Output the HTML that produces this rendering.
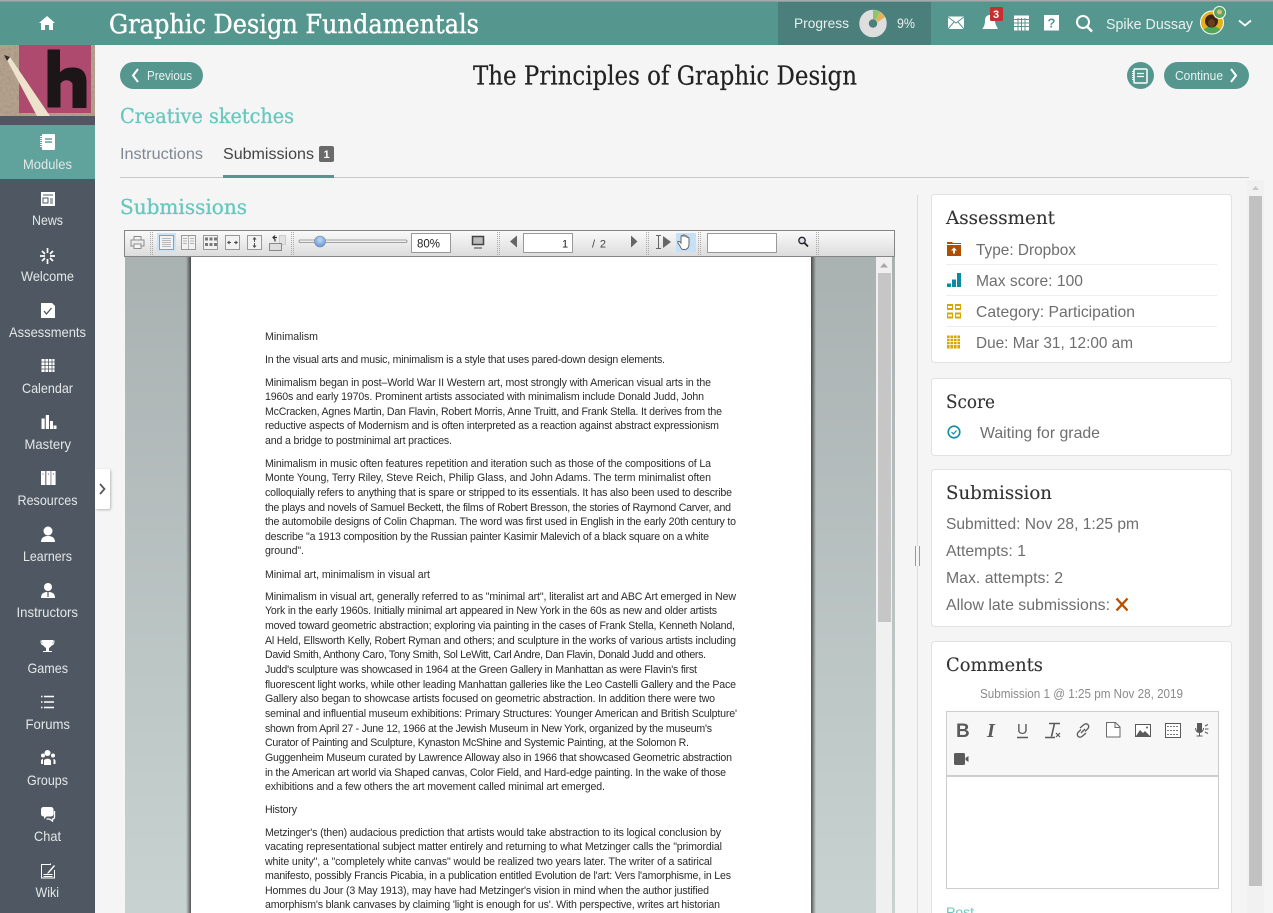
<!DOCTYPE html>
<html><head><meta charset="utf-8"><title>The Principles of Graphic Design</title>
<style>
html,body{margin:0;padding:0;width:1273px;height:913px;overflow:hidden;background:#f5f5f5}
svg{display:block}
text{font-family:"Liberation Sans",sans-serif;white-space:pre}
.s{font-family:"DejaVu Serif","Liberation Serif",serif}
.n text{font-size:14px;fill:#e4e7e8}
.r text{font-size:16px;fill:#6e6e6e}
.p text{font-size:10.6px;fill:#2c2c2c}
.w{fill:#fff}
.d{fill:none;stroke:#aaa;stroke-width:1;stroke-dasharray:1 1}
.ch{font-size:18.5px;fill:#333;stroke:#333;stroke-width:.12}
.r text.ch{font-size:18.5px;fill:#333}
</style></head><body>
<svg width="1273" height="913" viewBox="0 0 1273 913" xmlns="http://www.w3.org/2000/svg">
<defs>
<linearGradient id="tb" x1="0" y1="0" x2="0" y2="1"><stop offset="0" stop-color="#fafafa"/><stop offset="1" stop-color="#dcdcdc"/></linearGradient>
<linearGradient id="vb" x1="0" y1="0" x2="0" y2="1"><stop offset="0" stop-color="#a9b1b1"/><stop offset="1" stop-color="#c8d3d1"/></linearGradient>
<radialGradient id="kn" cx=".5" cy=".35" r=".7"><stop offset="0" stop-color="#c4daf3"/><stop offset="1" stop-color="#5a8fd0"/></radialGradient>
<linearGradient id="sh" x1="0" y1="0" x2="1" y2="0"><stop offset="0" stop-color="#000" stop-opacity="0"/><stop offset="1" stop-color="#000" stop-opacity=".6"/></linearGradient>
<linearGradient id="sh2" x1="0" y1="0" x2="1" y2="0"><stop offset="0" stop-color="#000" stop-opacity=".6"/><stop offset="1" stop-color="#000" stop-opacity="0"/></linearGradient>
<filter id="grain" x="0" y="0" width="100%" height="100%"><feTurbulence type="fractalNoise" baseFrequency=".35" numOctaves="2" seed="4"/><feColorMatrix values="0 0 0 0 .35  0 0 0 0 .27  0 0 0 0 .2  0 0 0 1.3 -.45"/></filter>
<filter id="ts" x="-50%" y="-20%" width="200%" height="140%"><feDropShadow dx="1" dy="1" stdDeviation="1.2" flood-color="#000" flood-opacity=".25"/></filter>
</defs>
<rect width="1273" height="913" fill="#f5f5f5"/>

<!-- top bar -->
<rect width="1273" height="45" fill="#55978f"/>
<rect width="1273" height="1.5" fill="#a9a9a9"/>
<path class="w" d="M47 16l8 7h-2v7h-4v-5h-4v5h-4v-7h-2z"/>
<text class="s" x="109" y="33" font-size="26" fill="#fff" stroke="#fff" stroke-width=".4" textLength="370" lengthAdjust="spacingAndGlyphs">Graphic Design Fundamentals</text>
<rect x="778" y="2" width="153" height="43" fill="#4a7f7b"/>
<text x="794" y="28" font-size="14" fill="#e8f0ef" textLength="55" lengthAdjust="spacingAndGlyphs">Progress</text>
<circle cx="873" cy="23.5" r="9" fill="none" stroke="#dedede" stroke-width="9.5"/>
<path d="M873 10a13.500 13.500 0 0 1 7 2l-4 8a5 5 0 0 0-3-1z" fill="#8fc46d"/>
<path d="M880 12a13.500 13.500 0 0 1 5 5l-7 5a5 5 0 0 0-2-2z" fill="#e4b25c"/>
<text x="897" y="28" font-size="14" fill="#e8f0ef" textLength="18" lengthAdjust="spacingAndGlyphs">9%</text>
<rect x="948" y="16.500" width="16" height="12.500" fill="#fff"/>
<path d="M948 17l8 6 8-6M948 29l6-7M964 29l-6-7" fill="none" stroke="#55978f" stroke-width="1"/>
<path class="w" d="M990 15c4 0 5 3 5 6 0 3 2 6 3 8h-16c2-2 3-5 3-8 0-3 1-6 5-6z"/>
<rect x="990" y="7" width="13" height="14" rx="1.500" fill="#c62f2f"/>
<text x="993" y="18" font-size="11" font-weight="bold" fill="#fff">3</text>
<rect x="1014" y="15.500" width="15" height="15" fill="#fff"/>
<path d="M1014 19.500h15M1014 23h15M1014 26.500h15M1018 18v13M1021.500 18v13M1025 18v13" stroke="#55978f" stroke-width="1"/>
<rect x="1044" y="15" width="15" height="15.500" fill="#fff"/>
<text x="1047.500" y="27.500" font-size="13" font-weight="bold" fill="#55978f">?</text>
<circle cx="1083" cy="22" r="6" fill="none" stroke="#fff" stroke-width="2"/><path d="M1087 26.500l5 5" stroke="#fff" stroke-width="2.500"/>
<text x="1106" y="29" font-size="14.500" fill="#e8f0ef" textLength="87" lengthAdjust="spacingAndGlyphs">Spike Dussay</text>
<circle cx="1212" cy="22.500" r="12" fill="#fff"/><circle cx="1212" cy="22.500" r="11" fill="#e5b01c"/>
<path d="M1203.500 29.500a11 11 0 0 0 17 0l-5-3h-7z" fill="#4fa85a"/><circle cx="1211.500" cy="21" r="6.500" fill="#3f2412"/><ellipse cx="1211.500" cy="23" rx="3.500" ry="4" fill="#6a3d1f"/>
<circle cx="1219.500" cy="12.500" r="6.500" fill="#fff"/><circle cx="1219.500" cy="12.500" r="5.500" fill="#58a55c"/><circle cx="1219.500" cy="12" r="2.500" fill="#e2b68c"/>
<path d="M1239 20.500l6 5 6-5" fill="none" stroke="#fff" stroke-width="1.800"/>

<!-- sidebar -->
<rect y="45" width="95" height="868" fill="#4f5862"/>
<rect y="125" width="95" height="54" fill="#5fa39c"/>
<!-- logo -->
<rect y="45" width="95" height="71" fill="#b5a28e"/>
<rect y="45" width="95" height="71" filter="url(#grain)"/>
<rect x="19" y="45" width="72" height="68" fill="#ad4a6e"/>
<path d="M47.500 49.500h12.500v23c4-5 9-5 13-5 9 0 13.500 5 13.500 14v26.500h-14V84c-2-5-10-5-12 0v23.500H47.500z" fill="#1c1618"/>
<path d="M7 60l3-3 40 59H37z" fill="#ede3cc"/><path d="M4 55l6 2-3 4z" fill="#33302e"/>

<g class="n">
<text x="23" y="169" textLength="49" lengthAdjust="spacingAndGlyphs">Modules</text>
<text x="32" y="225" textLength="31" lengthAdjust="spacingAndGlyphs">News</text>
<text x="21" y="281" textLength="53" lengthAdjust="spacingAndGlyphs">Welcome</text>
<text x="9" y="337" textLength="77" lengthAdjust="spacingAndGlyphs">Assessments</text>
<text x="22" y="393" textLength="51" lengthAdjust="spacingAndGlyphs">Calendar</text>
<text x="24.500" y="449" textLength="46.500" lengthAdjust="spacingAndGlyphs">Mastery</text>
<text x="17.500" y="505" textLength="60" lengthAdjust="spacingAndGlyphs">Resources</text>
<text x="23" y="561" textLength="49" lengthAdjust="spacingAndGlyphs">Learners</text>
<text x="16.500" y="617" textLength="61.500" lengthAdjust="spacingAndGlyphs">Instructors</text>
<text x="27.500" y="673" textLength="40.500" lengthAdjust="spacingAndGlyphs">Games</text>
<text x="25.500" y="729" textLength="44.500" lengthAdjust="spacingAndGlyphs">Forums</text>
<text x="27" y="785" textLength="41" lengthAdjust="spacingAndGlyphs">Groups</text>
<text x="34" y="841" textLength="27" lengthAdjust="spacingAndGlyphs">Chat</text>
<text x="35.500" y="897" textLength="23.500" lengthAdjust="spacingAndGlyphs">Wiki</text>
</g>
<!-- modules icon -->
<rect x="42" y="134" width="13" height="16" rx="1" fill="#fff"/><path d="M45 139h7M45 142h7" stroke="#5fa39c" stroke-width="1.500"/><path d="M41 136v12" stroke="#fff" stroke-width="2" stroke-dasharray="1 1"/>
<!-- news -->
<rect x="41" y="192" width="14" height="14" fill="#fff"/><path d="M43 195h10M43 198h5v5h-5zM50 199h3M50 201h3M50 203h3" stroke="#4f5862" stroke-width="1" fill="none"/>
<!-- welcome -->
<path d="M47.500 248v5M47.500 259v5M40 256h5M50 256h5M42 251l3 3M50 258l3 3M53 251l-3 3M45 258l-3 3" stroke="#fff" stroke-width="1.700" fill="none"/>
<!-- assessments -->
<path class="w" d="M41 303h11l3 3v12H41z"/><path d="M44 311l2.500 3 5-6" fill="none" stroke="#4f5862" stroke-width="1.300"/>
<!-- calendar -->
<rect x="41.500" y="359" width="13" height="13" fill="#fff"/><path d="M41.500 362h13M41.500 365.500h13M41.500 369h13M45 359v13M48.500 359v13M52 359v13" stroke="#4f5862" stroke-width=".8"/>
<!-- mastery -->
<path class="w" d="M41.500 418.500h3.200V429h-3.200zM45.800 415h3.200v14h-3.200zM50 421h3v8h-3zM53.500 425.500h3V429h-3z"/>
<!-- resources -->
<rect x="41" y="471" width="4.300" height="14" fill="#fff"/><rect x="46.300" y="471" width="4.300" height="14" fill="#fff"/><rect x="51.300" y="471" width="4.300" height="14" fill="#fff"/>
<path d="M43 473.500v1M48.400 473.500v1M53.400 473.500v1" stroke="#4f5862"/>
<!-- learners -->
<circle cx="48" cy="531" r="4.500" fill="#fff"/><path class="w" d="M41 542c0-5 4-6 7-6s7 1 7 6z"/>
<!-- instructors -->
<circle cx="48" cy="587" r="4" fill="#fff"/><path class="w" d="M41 598c0-5 3-6 7-6s7 1 7 6z"/><path d="M48 592v5" stroke="#4f5862" stroke-width="1.200"/>
<!-- games -->
<path class="w" d="M42 640h11c0 4-1 6-4 8v3h3v1h-9v-1h3v-3c-3-2-4-4-4-8z"/><path d="M42 641h-1c0 3 1 4 3 4M53 641h1c0 3-1 4-3 4" stroke="#fff" fill="none"/>
<!-- forums -->
<path d="M41 696.500h1.500M44 696.500h10M41 702h1.500M44 702h10M41 707.500h1.500M44 707.500h10" stroke="#fff" stroke-width="1.600" fill="none"/>
<!-- groups -->
<circle cx="47.500" cy="753" r="3" fill="#fff"/><circle cx="43" cy="755.500" r="2" fill="#fff"/><circle cx="53" cy="755.500" r="2" fill="#fff"/><path class="w" d="M44 765v-4c0-3 7-3 7 0v4zM41 764v-3c0-2 2-2 2-2v5zM55.500 764v-3c0-2-2-2-2-2v5z"/>
<!-- chat -->
<rect x="41" y="807" width="12.500" height="9.500" rx="2.500" fill="#fff"/><path class="w" d="M44 816v3l3-3z"/><path d="M54.500 811v6c0 1.500-1 2-2 2l0 2-3-2h-3" fill="none" stroke="#fff" stroke-width="1.300"/>
<!-- wiki -->
<path d="M41.500 864.500h9v-1M41.500 864v14h13v-8" fill="none" stroke="#fff" stroke-width="1"/><path class="w" d="M48 872l6-7 1 1-6 7-2 1z"/><path d="M43.500 874.500h9M43.500 876.500h9" stroke="#fff"/>
<!-- collapse tab -->
<rect x="95" y="469" width="15" height="40" rx="2" fill="#fff" filter="url(#ts)"/>
<path d="M100 484l4.500 5-4.500 5" fill="none" stroke="#555" stroke-width="1.700"/>

<!-- header -->
<rect x="120" y="62" width="83" height="27" rx="13.500" fill="#55978f"/>
<path d="M138 69l-5 6.500 5 6.500" fill="none" stroke="#fff" stroke-width="2"/>
<text x="147" y="80" font-size="12.500" fill="#eaf2f1" textLength="45" lengthAdjust="spacingAndGlyphs">Previous</text>
<text class="s" x="473" y="84.500" font-size="26" fill="#222" stroke="#222" stroke-width=".2" textLength="384" lengthAdjust="spacingAndGlyphs">The Principles of Graphic Design</text>
<circle cx="1140.500" cy="75.500" r="13.500" fill="#55978f"/>
<rect x="1134" y="69" width="13" height="14" rx="1" fill="none" stroke="#fff" stroke-width="1.500"/><path d="M1137 73.500h7M1137 76.500h7" stroke="#fff" stroke-width="1.300"/><path d="M1133 71v10" stroke="#fff" stroke-width="2" stroke-dasharray="1 1"/>
<rect x="1164" y="62" width="85" height="27" rx="13.500" fill="#55978f"/>
<text x="1175" y="80" font-size="12.500" fill="#eaf2f1" textLength="48" lengthAdjust="spacingAndGlyphs">Continue</text>
<path d="M1231 69l5 6.500-5 6.500" fill="none" stroke="#fff" stroke-width="2"/>
<text class="s" x="120" y="123" font-size="20.500" fill="#68c8be" stroke="#68c8be" stroke-width=".3" textLength="174" lengthAdjust="spacingAndGlyphs">Creative sketches</text>
<text x="120" y="159" font-size="16" fill="#7f8893" textLength="83" lengthAdjust="spacingAndGlyphs">Instructions</text>
<text x="223" y="159" font-size="16" fill="#444" textLength="91" lengthAdjust="spacingAndGlyphs">Submissions</text>
<rect x="319" y="146" width="15" height="16" rx="2" fill="#6a6a6a"/>
<text x="323.500" y="158" font-size="11" font-weight="bold" fill="#fff">1</text>
<rect x="120" y="177" width="1129" height="1" fill="#c8c8c8"/>
<rect x="223" y="175" width="111" height="3" fill="#55978f"/>
<text class="s" x="120" y="214" font-size="20.500" fill="#68c8be" stroke="#68c8be" stroke-width=".3" textLength="127" lengthAdjust="spacingAndGlyphs">Submissions</text>

<!-- viewer -->
<rect x="125" y="256" width="770" height="657" fill="url(#vb)"/>
<rect x="124.500" y="230.500" width="770" height="26" fill="url(#tb)" stroke="#858585"/>
<rect x="186" y="257" width="5" height="656" fill="url(#sh)"/>
<rect x="811" y="257" width="5" height="656" fill="url(#sh2)"/>
<rect x="191" y="257" width="620" height="656" fill="#fff"/>
<rect x="876" y="257" width="16" height="656" fill="#f0f0f0"/>
<path d="M880 267.500l4-4.500 4 4.500z" fill="#a8a8a8"/>
<rect x="878" y="273" width="13" height="349" fill="#c6c6c6"/>
<!-- viewer toolbar -->
<g fill="none" stroke="#8d8d8d">
<rect x="131" y="240" width="13" height="6"/><rect x="134" y="236.500" width="7" height="3.500"/><rect x="134" y="244" width="7" height="4.500" fill="#f5f5f5"/>
</g>
<path class="d" d="M150.500 232v23M291.500 232v23M497.500 232v23M646.500 232v23M698.500 232v23M816.500 232v23"/>
<path class="d" d="M152.500 232v23M293.500 232v23M499.500 232v23M648.500 232v23M700.500 232v23M818.500 232v23"/>
<rect x="157" y="233" width="19" height="19" fill="#c9e4f9"/>
<g fill="#f2f2f2" stroke="#999">
<rect x="159.500" y="235.500" width="14" height="14"/>
<rect x="181.500" y="235.500" width="14" height="14"/>
<rect x="203.500" y="235.500" width="14" height="14"/>
<rect x="225.500" y="235.500" width="14" height="14"/>
<rect x="247.500" y="235.500" width="14" height="14"/>
<rect x="279.500" y="235.500" width="6" height="9" fill="#e2e2e2" stroke="#ccc"/>
<rect x="269.500" y="243.500" width="12" height="7" fill="#ddd" stroke="#888"/>
</g>
<path d="M162 238.500h9M162 240.500h9M162 242.500h9M162 244.500h9M162 246.500h9" stroke="#a5a5a5" stroke-width=".8"/>
<path d="M188.500 236v13M183 238.500h4M183 241h4M183 243.500h4M190 238.500h4M190 241h4M190 243.500h4" stroke="#b5b5b5"/>
<path d="M205 237.500h3v3h-3zM209.500 237.500h3v3h-3zM214 237.500h3v3h-3zM205 243h3v3h-3zM209.500 243h3v3h-3zM214 243h3v3h-3z" fill="#777"/>
<path d="M228 242.500h3M234 242.500h3" stroke="#555" fill="none"/><path d="M229.500 240.500l-2.500 2 2.500 2zM235.500 240.500l2.500 2-2.500 2z" fill="#444"/>
<path d="M254.500 239v3M254.500 246v-3" stroke="#555" fill="none"/><path d="M252.500 239.500l2-2.500 2 2.500zM252.500 245.500l2 2.500 2-2.500z" fill="#444"/>
<path d="M277 237.500h-4M275 235.500l-2 2 2 2v2" fill="none" stroke="#333" stroke-width="1.200"/>
<rect x="299" y="240" width="108" height="2.500" rx="1" fill="#eee" stroke="#888" stroke-width=".8"/>
<circle cx="320" cy="241.500" r="5.500" fill="url(#kn)" stroke="#6f8fb5" stroke-width=".6"/>
<rect x="411.500" y="233.500" width="39" height="19" fill="#fff" stroke="#999"/>
<text x="417" y="247.500" font-size="11.500" fill="#222" textLength="23">80%</text>
<rect x="472.500" y="236.500" width="11" height="8" fill="#bbb" stroke="#444" stroke-width="1.500"/><path d="M474 248h8" stroke="#777" stroke-width="1.500"/>
<path d="M517 235.500v12l-7-6z" fill="#666"/>
<rect x="523.500" y="233.500" width="49" height="19" fill="#fff" stroke="#999"/>
<text x="562" y="247.500" font-size="11" fill="#222">1</text>
<text x="592" y="247.500" font-size="11" fill="#444" textLength="14">/ 2</text>
<path d="M631 235.500v12l6.500-6z" fill="#666"/>
<path d="M656 235.500h5M656 248.500h5M658.500 235.500v13" stroke="#666" fill="none"/><path d="M663 236v12l8-6z" fill="#666"/>
<rect x="676" y="233" width="20" height="19" fill="#c4e1f7"/>
<path d="M680 246l-2-3c-1-2 1-2 2-1l1 1v-6c0-2 2-2 2 0v-1c0-1.500 2-1.500 2 0v1c0-1.500 2-1.500 2 0v1c0-1 2-1 2 .5v6c0 3-2 5-4 5h-2c-1 0-2-1-3-3.500z" fill="#fff" stroke="#666"/>
<rect x="707.500" y="233.500" width="69" height="19" fill="#fff" stroke="#999"/>
<circle cx="802" cy="240.500" r="3.200" fill="#dde" stroke="#222" stroke-width="1.300"/><path d="M804.500 243l3.500 3.500" stroke="#222" stroke-width="1.800"/>

<!-- pdf text -->
<g class="p">
<text x="265" y="340" textLength="53">Minimalism</text>
<text x="265" y="363" textLength="400">In the visual arts and music, minimalism is a style that uses pared-down design elements.</text>
<text x="265" y="386" textLength="446">Minimalism began in post–World War II Western art, most strongly with American visual arts in the</text>
<text x="265" y="400" textLength="439">1960s and early 1970s. Prominent artists associated with minimalism include Donald Judd, John</text>
<text x="265" y="415" textLength="457">McCracken, Agnes Martin, Dan Flavin, Robert Morris, Anne Truitt, and Frank Stella. It derives from the</text>
<text x="265" y="429" textLength="454">reductive aspects of Modernism and is often interpreted as a reaction against abstract expressionism</text>
<text x="265" y="444" textLength="187">and a bridge to postminimal art practices.</text>
<text x="265" y="467" textLength="446">Minimalism in music often features repetition and iteration such as those of the compositions of La</text>
<text x="265" y="481" textLength="446">Monte Young, Terry Riley, Steve Reich, Philip Glass, and John Adams. The term minimalist often</text>
<text x="265" y="496" textLength="467">colloquially refers to anything that is spare or stripped to its essentials. It has also been used to describe</text>
<text x="265" y="511" textLength="466">the plays and novels of Samuel Beckett, the films of Robert Bresson, the stories of Raymond Carver, and</text>
<text x="265" y="525" textLength="471">the automobile designs of Colin Chapman. The word was first used in English in the early 20th century to</text>
<text x="265" y="540" textLength="444">describe "a 1913 composition by the Russian painter Kasimir Malevich of a black square on a white</text>
<text x="265" y="554" textLength="39">ground".</text>
<text x="265" y="578" textLength="165">Minimal art, minimalism in visual art</text>
<text x="265" y="600" textLength="471">Minimalism in visual art, generally referred to as "minimal art", literalist art and ABC Art emerged in New</text>
<text x="265" y="614" textLength="452">York in the early 1960s. Initially minimal art appeared in New York in the 60s as new and older artists</text>
<text x="265" y="629" textLength="470">moved toward geometric abstraction; exploring via painting in the cases of Frank Stella, Kenneth Noland,</text>
<text x="265" y="644" textLength="471">Al Held, Ellsworth Kelly, Robert Ryman and others; and sculpture in the works of various artists including</text>
<text x="265" y="658" textLength="441">David Smith, Anthony Caro, Tony Smith, Sol LeWitt, Carl Andre, Dan Flavin, Donald Judd and others.</text>
<text x="265" y="673" textLength="432">Judd's sculpture was showcased in 1964 at the Green Gallery in Manhattan as were Flavin's first</text>
<text x="265" y="688" textLength="471">fluorescent light works, while other leading Manhattan galleries like the Leo Castelli Gallery and the Pace</text>
<text x="265" y="702" textLength="450">Gallery also began to showcase artists focused on geometric abstraction. In addition there were two</text>
<text x="265" y="717" textLength="472">seminal and influential museum exhibitions: Primary Structures: Younger American and British Sculpture'</text>
<text x="265" y="732" textLength="447">shown from April 27 - June 12, 1966 at the Jewish Museum in New York, organized by the museum's</text>
<text x="265" y="746" textLength="424">Curator of Painting and Sculpture, Kynaston McShine and Systemic Painting, at the Solomon R.</text>
<text x="265" y="761" textLength="467">Guggenheim Museum curated by Lawrence Alloway also in 1966 that showcased Geometric abstraction</text>
<text x="265" y="776" textLength="461">in the American art world via Shaped canvas, Color Field, and Hard-edge painting. In the wake of those</text>
<text x="265" y="790" textLength="340">exhibitions and a few others the art movement called minimal art emerged.</text>
<text x="265" y="813" textLength="32">History</text>
<text x="265" y="836" textLength="456">Metzinger's (then) audacious prediction that artists would take abstraction to its logical conclusion by</text>
<text x="265" y="850" textLength="457">vacating representational subject matter entirely and returning to what Metzinger calls the "primordial</text>
<text x="265" y="865" textLength="447">white unity", a "completely white canvas" would be realized two years later. The writer of a satirical</text>
<text x="265" y="879" textLength="466">manifesto, possibly Francis Picabia, in a publication entitled Evolution de l'art: Vers l'amorphisme, in Les</text>
<text x="265" y="894" textLength="444">Hommes du Jour (3 May 1913), may have had Metzinger's vision in mind when the author justified</text>
<text x="265" y="908" textLength="455">amorphism's blank canvases by claiming 'light is enough for us'. With perspective, writes art historian</text>
</g>

<!-- divider + scrollbar -->
<rect x="917" y="195" width="1" height="718" fill="#dcdcdc"/>
<rect x="914" y="546" width="7" height="20" fill="#f5f5f5"/>
<path d="M915.500 546v20M919.500 546v20" stroke="#999" stroke-width="1"/>
<rect x="1247" y="180" width="17" height="733" fill="#f1f1f1"/>
<path d="M1252 190l3.500-4 3.500 4z" fill="#c8c8c8"/>
<rect x="1249" y="196" width="13" height="690" fill="#c1c1c1"/>

<!-- cards -->
<g fill="#fff" stroke="#e2e2e2">
<rect x="931.500" y="194.500" width="300" height="168" rx="3"/>
<rect x="931.500" y="378.500" width="300" height="77" rx="3"/>
<rect x="931.500" y="469.500" width="300" height="157" rx="3"/>
<rect x="931.500" y="641.500" width="300" height="280" rx="3"/>
</g>
<g class="r">
<text class="s ch" x="946" y="224" textLength="109" lengthAdjust="spacingAndGlyphs">Assessment</text>
<text x="976" y="255" textLength="100" lengthAdjust="spacingAndGlyphs">Type: Dropbox</text>
<text x="976" y="286" textLength="107" lengthAdjust="spacingAndGlyphs">Max score: 100</text>
<text x="976" y="317" textLength="159" lengthAdjust="spacingAndGlyphs">Category: Participation</text>
<text x="976" y="348" textLength="157" lengthAdjust="spacingAndGlyphs">Due: Mar 31, 12:00 am</text>
<text class="s ch" x="946" y="408" textLength="49" lengthAdjust="spacingAndGlyphs">Score</text>
<text x="980" y="438" textLength="120" lengthAdjust="spacingAndGlyphs">Waiting for grade</text>
<text class="s ch" x="946" y="499" textLength="106" lengthAdjust="spacingAndGlyphs">Submission</text>
<text x="946" y="529" textLength="193" lengthAdjust="spacingAndGlyphs">Submitted: Nov 28, 1:25 pm</text>
<text x="946" y="556" textLength="80" lengthAdjust="spacingAndGlyphs">Attempts: 1</text>
<text x="946" y="583" textLength="117" lengthAdjust="spacingAndGlyphs">Max. attempts: 2</text>
<text x="946" y="610" textLength="164" lengthAdjust="spacingAndGlyphs">Allow late submissions:</text>
<text class="s ch" x="946" y="671" textLength="97" lengthAdjust="spacingAndGlyphs">Comments</text>
<text x="980" y="698" style="font-size:12.5px;fill:#8a8a8a" textLength="203" lengthAdjust="spacingAndGlyphs">Submission 1 @ 1:25 pm Nov 28, 2019</text>
</g>
<path d="M946 264.500h271M946 295.500h271M946 326.500h271" stroke="#eee"/>
<!-- type icon -->
<path d="M947 242h5l1 1h8v13h-14z" fill="#b04e00"/><path d="M947 244.500h14" stroke="#fff"/><path d="M954 247.500l3 3h-2v3h-2v-3h-2z" fill="#fff"/>
<!-- max icon -->
<path d="M947 283.500h4V287h-4zM952 279.500h4V287h-4zM957 273h4v14h-4z" fill="#0c8aa0"/>
<!-- category -->
<g fill="#d4a800"><path d="M947 304h6v6h-6zM955 304h6v6h-6zM947 312.500h6v6h-6zM955 312.500h6v6h-6z"/></g>
<path d="M948 306h4v2h-4zM956 306h4v2h-4zM948 314.500h4v2h-4zM956 314.500h4v2h-4z" fill="#fff"/>
<!-- due -->
<rect x="947" y="335.500" width="13" height="13" fill="#d4a800"/>
<path d="M947 338.500h13M947 341.500h13M947 344.500h13M950 335.500v13M953.500 335.500v13M957 335.500v13" stroke="#fff" stroke-width=".8"/>
<!-- clock -->
<circle cx="954" cy="432" r="5.800" fill="none" stroke="#138ea5" stroke-width="1.600"/><path d="M951.500 432l2 2 3-3.500" fill="none" stroke="#138ea5" stroke-width="1.200"/>
<!-- x -->
<path d="M1116.500 598.500l11 12M1127.500 598.500l-11 12" stroke="#b85000" stroke-width="2.400"/>
<!-- editor -->
<rect x="946.500" y="711.500" width="272" height="177" fill="#fff" stroke="#cdcdcd"/>
<rect x="947" y="712" width="271" height="63" fill="#f7f7f7"/>
<rect x="947" y="775" width="271" height="2" fill="#cdcdcd"/>
<text x="956" y="737" font-size="19" font-weight="bold" fill="#5a5a5a">B</text>
<text x="987" y="737" style="font-family:'Liberation Serif',serif;font-size:20px;font-style:italic;font-weight:bold" fill="#5a5a5a">I</text>
<text x="1017" y="734" font-size="15" fill="#5a5a5a">U</text><path d="M1017 737.500h11" stroke="#5a5a5a" stroke-width="1.500"/>
<path d="M1049 723.500h11M1054.500 723.500l-3 13M1045 737.500h10" stroke="#5a5a5a" stroke-width="1.600" fill="none"/><path d="M1056 733l4 4M1060 733l-4 4" stroke="#5a5a5a" stroke-width="1.200"/>
<path d="M1080 728l4-3.500c3-2 6 1 4 4l-3 3M1086 733l-4 3.500c-3 2-6-1-4-4l3-3M1081 733l4-4" fill="none" stroke="#5a5a5a" stroke-width="1.300"/>
<path d="M1106.500 722.500h9l4.500 4.500v10h-13.500zM1115 722.500v5h5" fill="#fff" stroke="#6a6a6a"/>
<rect x="1135.500" y="724.500" width="15" height="12" fill="#fff" stroke="#5a5a5a"/><path d="M1136 736l4-6 3 3 2-2 5 5z" fill="#5a5a5a"/><circle cx="1147" cy="727.500" r="1" fill="#5a5a5a"/>
<rect x="1165.500" y="723.500" width="15" height="14" fill="#fff" stroke="#5a5a5a"/><path d="M1167 726.500h12M1167 730.500h12M1167 734.500h12" stroke="#777" stroke-dasharray="2 1"/>
<path d="M1197 723h5v8c0 2-5 2-5 0z" fill="#5a5a5a"/><path d="M1195.500 728c0 6 8 6 8 0M1199.500 733v3M1196.500 736h6M1205 726l3-1.500M1205 729h3.500M1205 732l3 1.500" fill="none" stroke="#5a5a5a"/>
<rect x="954" y="753" width="11" height="12" rx="1.500" fill="#5a5a5a"/><path d="M965.500 758l3-2v6l-3-2z" fill="#5a5a5a"/>
<text x="946" y="917" font-size="14" fill="#68c8be" textLength="28">Post</text>
</svg>
</body></html>
